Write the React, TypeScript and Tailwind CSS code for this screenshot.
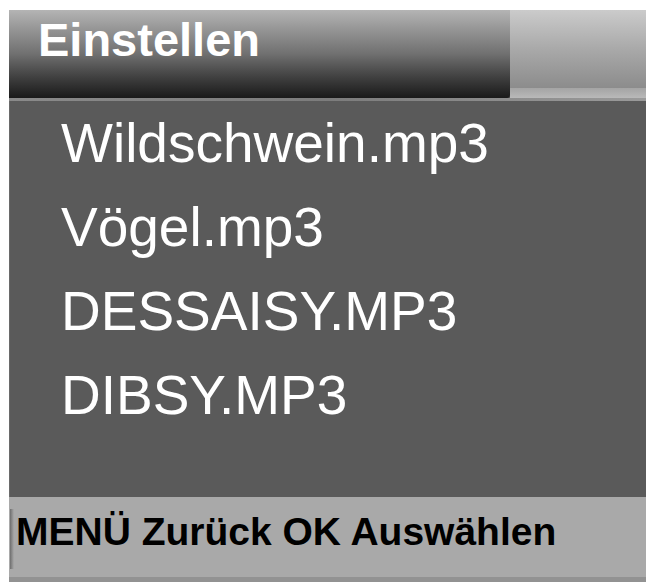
export default function App() {
  const files = ['Wildschwein.mp3', 'Vögel.mp3', 'DESSAISY.MP3', 'DIBSY.MP3'];

  return (
    <div className="w-[653px] h-[587px] bg-white pt-[10px] pl-[9px]" style={{ fontFamily: '"Liberation Sans", Arial, sans-serif' }}>
      <div className="w-[637px] h-[572px] flex flex-col bg-[#5a5a5a]">
        {/* header */}
        <div className="flex h-[88px]">
          <div className="w-[501px] h-full rounded-br-[3px] bg-gradient-to-b from-[#b4b4b4] via-[#707070] to-[#1a1a1a] pt-[6px] pl-[29px]">
            <span className="text-[47px] leading-none font-bold text-white">Einstellen</span>
          </div>
          <div className="flex-1 flex flex-col">
            <div className="flex-1 bg-gradient-to-b from-[#cbcbcb] via-[#a9a9a9] to-[#8c8c8c]" />
            <div className="h-[10px] bg-gradient-to-b from-[#a4a4a4] to-[#b9b9b9]" />
          </div>
        </div>
        <div className="h-[3px] bg-gradient-to-r from-[#8a8a8a] via-[#7c7c7c] to-[#9a9a9a]" />

        {/* list */}
        <div className="h-[396px] pt-[0px] pl-[51px] border-l border-[#6a6a6a]">
          {files.map((f) => (
            <div key={f} className="text-[55px] leading-[84px] text-white">
              {f}
            </div>
          ))}
        </div>

        {/* footer */}
        <div className="relative flex-1 bg-[#a9a9a9] flex flex-col">
          <div className="absolute left-[1px] top-[12px] w-[4px] h-[60px] bg-gradient-to-r from-[#555555] to-transparent opacity-70" />
          <div className="flex-1 pt-[15px] pl-[7px]">
            <span className="text-[39px] leading-none font-bold text-black">MENÜ Zurück OK Auswählen</span>
          </div>
          <div className="h-[5px] bg-[#929292]" />
        </div>
      </div>
    </div>
  );
}
